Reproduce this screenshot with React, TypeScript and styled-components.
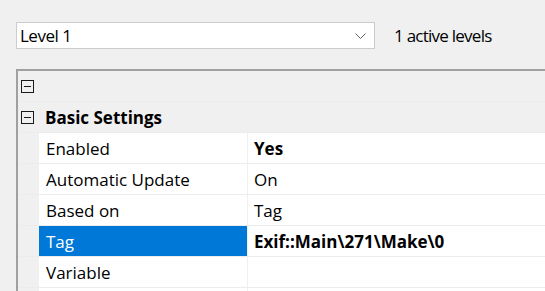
import React from "react";
import styled, { createGlobalStyle } from "styled-components";

const GlobalStyle = createGlobalStyle`
  html, body {
    margin: 0;
    padding: 0;
    background: #f0f0f0;
    overflow: hidden;
  }
  body {
    font-family: "Open Sans", "Noto Sans", sans-serif;
    font-size: 17px;
    color: #000;
  }
`;

const Page = styled.div`
  padding: 22px 0 0 16px;
  width: 529px;
  height: 269px;
  overflow: hidden;
`;

const TopBar = styled.div`
  display: flex;
  align-items: center;
  gap: 19px;
  height: 27px;
`;

const Combo = styled.div`
  box-sizing: border-box;
  width: 359px;
  height: 27px;
  background: #ffffff;
  border: 1px solid #cccccc;
  display: flex;
  align-items: center;
  justify-content: space-between;
  padding: 0 8px 0 3px;
  line-height: 1;
`;

const ComboText = styled.span`
  font-size: 17px;
  letter-spacing: -0.5px;
`;

const Label = styled.span`
  font-size: 17px;
  line-height: 1;
  letter-spacing: -0.75px;
`;

const Panel = styled.div`
  margin-top: 20px;
  border-top: 2px solid #a0a0a0;
  border-left: 2px solid #a0a0a0;
  display: flex;
  flex-direction: column;
  gap: 1px;
  background: #ececec;
`;

const CategoryRow = styled.div`
  height: 30px;
  display: flex;
  align-items: center;
  background: #f0f0f0;
  padding-left: 3px;
  gap: 11px;
`;

const ToggleBox = styled.span`
  box-sizing: border-box;
  width: 13px;
  height: 13px;
  border: 1px solid #1a1a1a;
  display: flex;
  align-items: center;
  justify-content: center;
  flex: none;
  &::after {
    content: "";
    width: 7px;
    height: 1px;
    background: #1a1a1a;
  }
`;

const CategoryTitle = styled.span`
  font-weight: 700;
  font-size: 17px;
`;

const PropRow = styled.div`
  height: 30px;
  display: grid;
  grid-template-columns: 20px 208px 1fr;
  column-gap: 1px;
  background: #f0f0f0;
`;

const Indent = styled.div`
  background: #f0f0f0;
`;

const NameCell = styled.div<{ $selected?: boolean }>`
  background: ${(p) => (p.$selected ? "#0078d7" : "#ffffff")};
  color: ${(p) => (p.$selected ? "#ffffff" : "#000000")};
  display: flex;
  align-items: center;
  padding-left: 7px;
  white-space: nowrap;
`;

const ValueCell = styled.div<{ $bold?: boolean }>`
  background: #ffffff;
  display: flex;
  align-items: center;
  padding-left: 6px;
  white-space: nowrap;
  font-weight: ${(p) => (p.$bold ? 700 : 400)};
`;

const Chevron = () => (
  <svg width="11" height="6" viewBox="0 0 11 6" style={{ display: "block" }}>
    <path d="M0.5 0.5 L5.5 5.5 L10.5 0.5" fill="none" stroke="#606060" strokeWidth="1" />
  </svg>
);

const props = [
  { name: "Enabled", value: "Yes", bold: true },
  { name: "Automatic Update", value: "On" },
  { name: "Based on", value: "Tag" },
  { name: "Tag", value: "Exif::Main\\271\\Make\\0", bold: true, selected: true },
  { name: "Variable", value: "" },
  { name: "", value: "" },
];

export default function App() {
  return (
    <>
      <GlobalStyle />
      <Page>
        <TopBar>
          <Combo>
            <ComboText>Level 1</ComboText>
            <Chevron />
          </Combo>
          <Label>1 active levels</Label>
        </TopBar>
        <Panel>
          <CategoryRow>
            <ToggleBox />
          </CategoryRow>
          <CategoryRow>
            <ToggleBox />
            <CategoryTitle>Basic Settings</CategoryTitle>
          </CategoryRow>
          {props.map((p, i) => (
            <PropRow key={i}>
              <Indent />
              <NameCell $selected={p.selected}>{p.name}</NameCell>
              <ValueCell $bold={p.bold}>{p.value}</ValueCell>
            </PropRow>
          ))}
        </Panel>
      </Page>
    </>
  );
}
